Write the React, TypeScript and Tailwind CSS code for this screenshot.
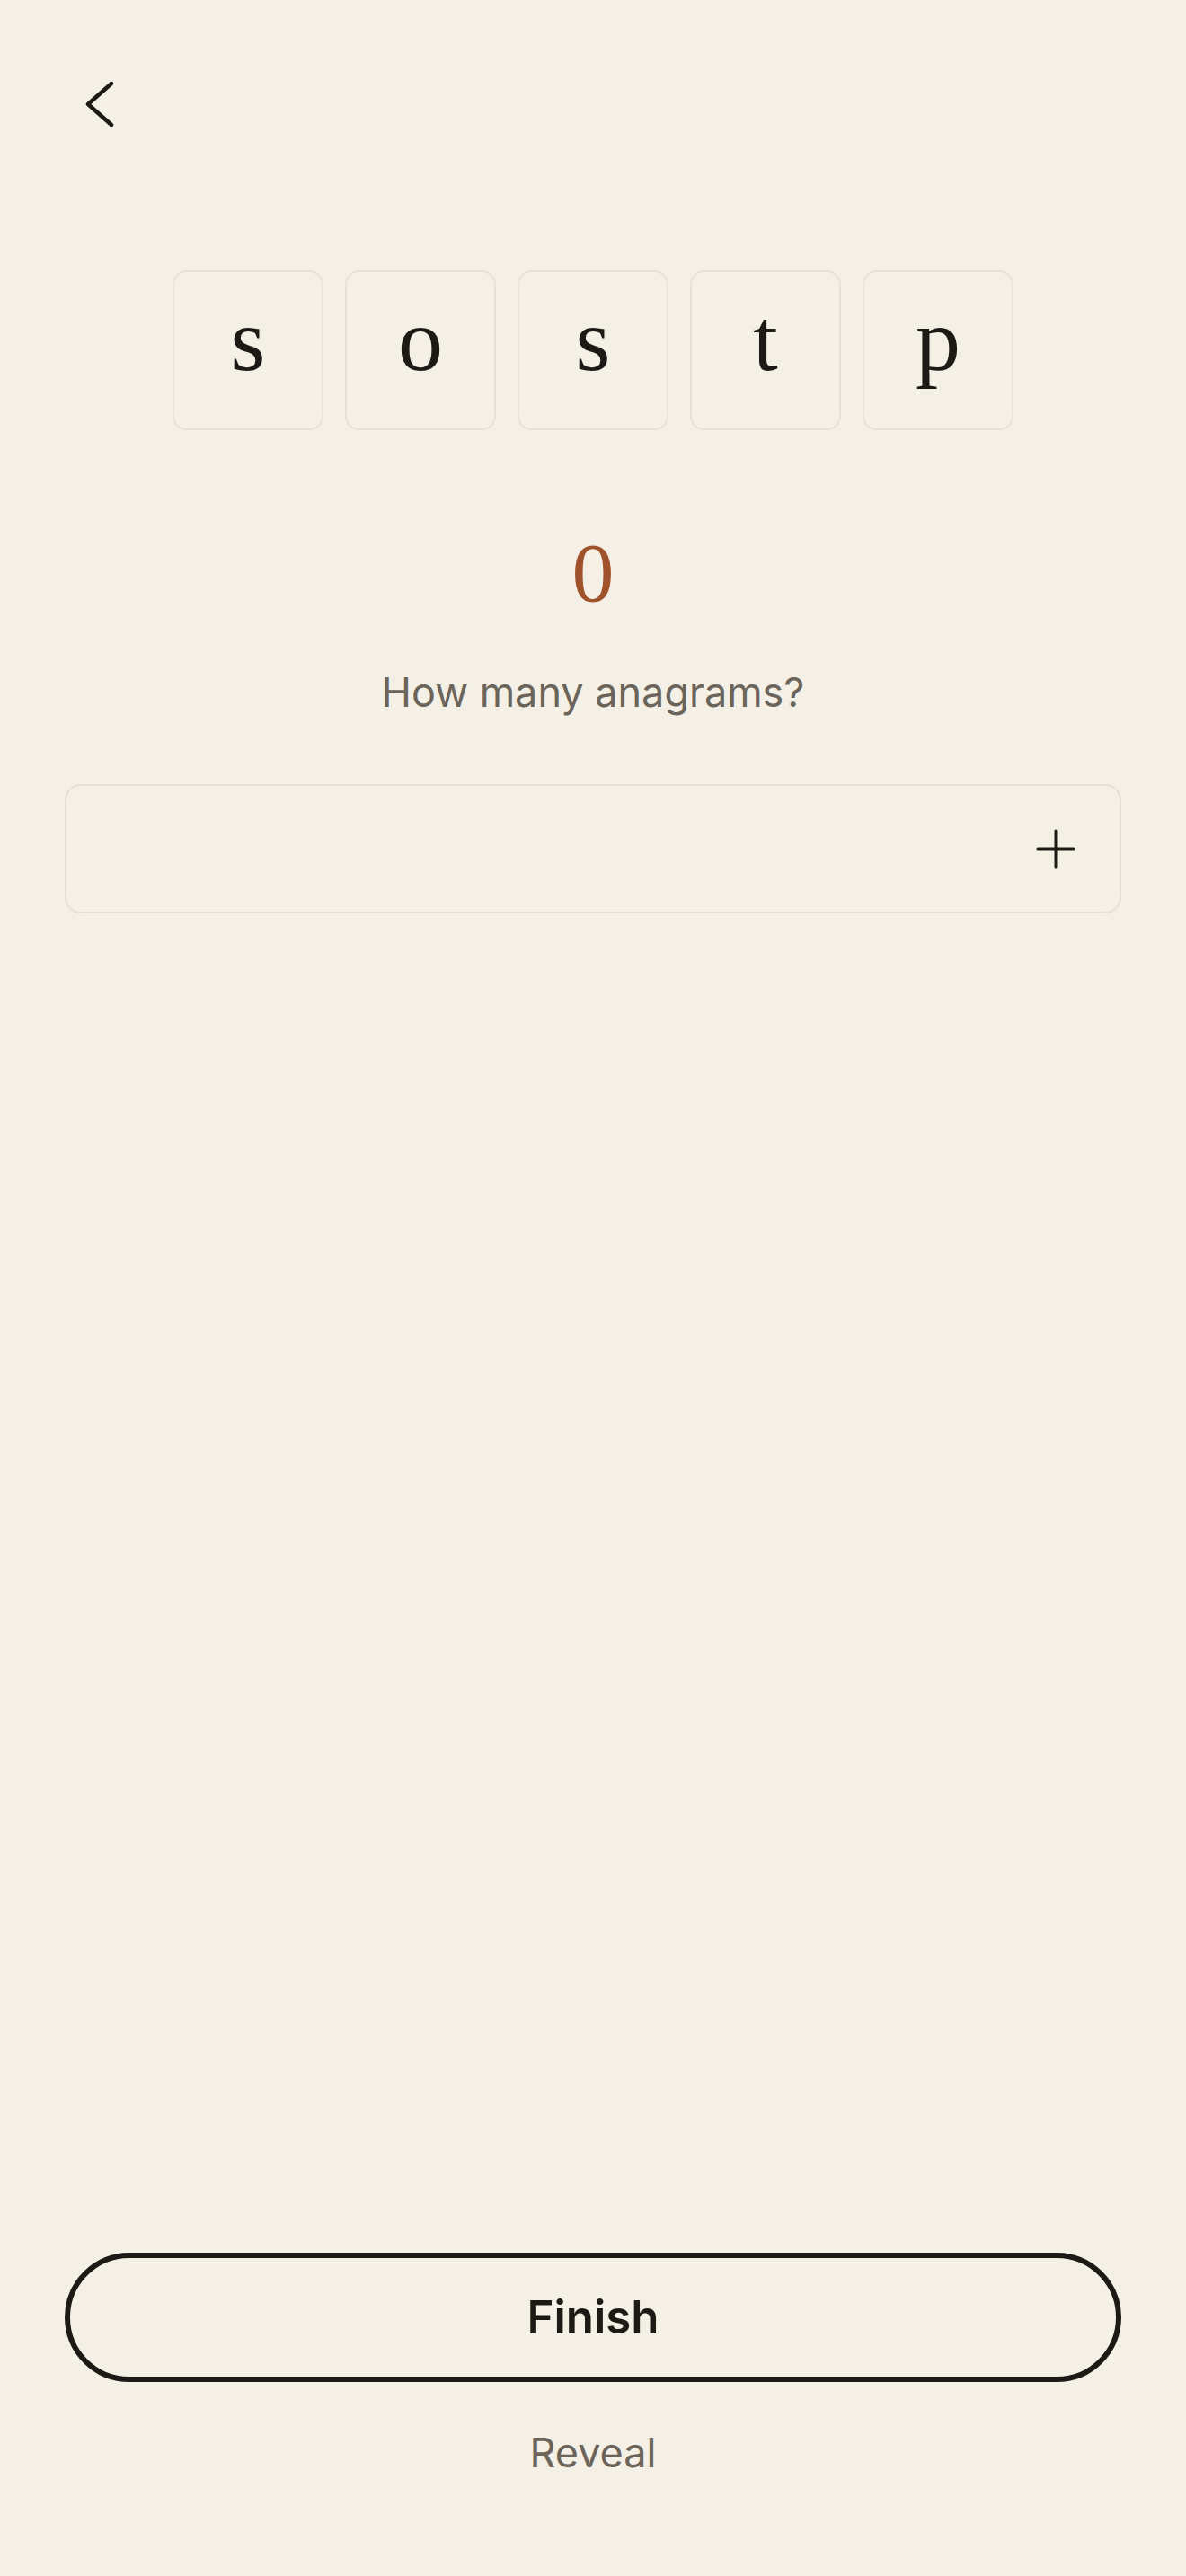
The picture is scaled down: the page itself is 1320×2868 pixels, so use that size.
import { useState } from "react";

const LETTERS = ["s", "o", "s", "t", "p"];

export default function App() {
  const [count] = useState(0);
  const [word, setWord] = useState("");

  return (
    <div className="flex min-h-screen flex-col bg-[#f4f0e6] font-['Inter',sans-serif] text-[#1c1a15]">
      <header className="pl-[86px] pt-[91px]">
        <button aria-label="Back" className="block">
          <svg width="50" height="50" viewBox="0 0 50 50" fill="none">
            <polyline points="38,2 12,25 38,48" stroke="#1c1a15" strokeWidth="4.5" strokeLinecap="round" strokeLinejoin="round" />
          </svg>
        </button>
      </header>

      <div className="mt-[160px] flex justify-center gap-[24px]">
        {LETTERS.map((l, i) => (
          <div key={i}
            className="flex h-[178px] w-[168px] items-center justify-center rounded-2xl border-2 border-[#e7e1d5] pb-[22px] font-['Liberation_Serif',serif] text-[100px] leading-none">
            {l}
          </div>
        ))}
      </div>

      <p className="mt-[111px] text-center font-['Liberation_Serif',serif] text-[94px] leading-none text-[#a0522d]">{count}</p>
      <p className="mt-[64px] text-center text-[45px] leading-none text-[#6b645a]">How many anagrams?</p>

      <div className="mx-[72px] mt-[80px] flex h-[144px] items-center rounded-[18px] border-2 border-[#e7e1d5] pl-[40px] pr-[49px]">
        <input value={word} onChange={(e) => setWord(e.target.value)}
          className="min-w-0 flex-1 bg-transparent text-[45px] outline-none" />
        <button aria-label="Add">
          <svg width="44" height="44" viewBox="0 0 44 44" fill="none" stroke="#1c1a15" strokeWidth="3" strokeLinecap="round">
            <line x1="22" y1="2" x2="22" y2="42" />
            <line x1="2" y1="22" x2="42" y2="22" />
          </svg>
        </button>
      </div>

      <div className="flex-1" />

      <div className="px-[72px] pb-[115px]">
        <button className="flex h-[144px] w-full items-center justify-center rounded-full border-[6px] border-[#1c1a15] text-[51px] font-semibold">
          Finish
        </button>
        <p className="mt-[56px] text-center text-[45px] leading-none text-[#6b645a]">Reveal</p>
      </div>
    </div>
  );
}
